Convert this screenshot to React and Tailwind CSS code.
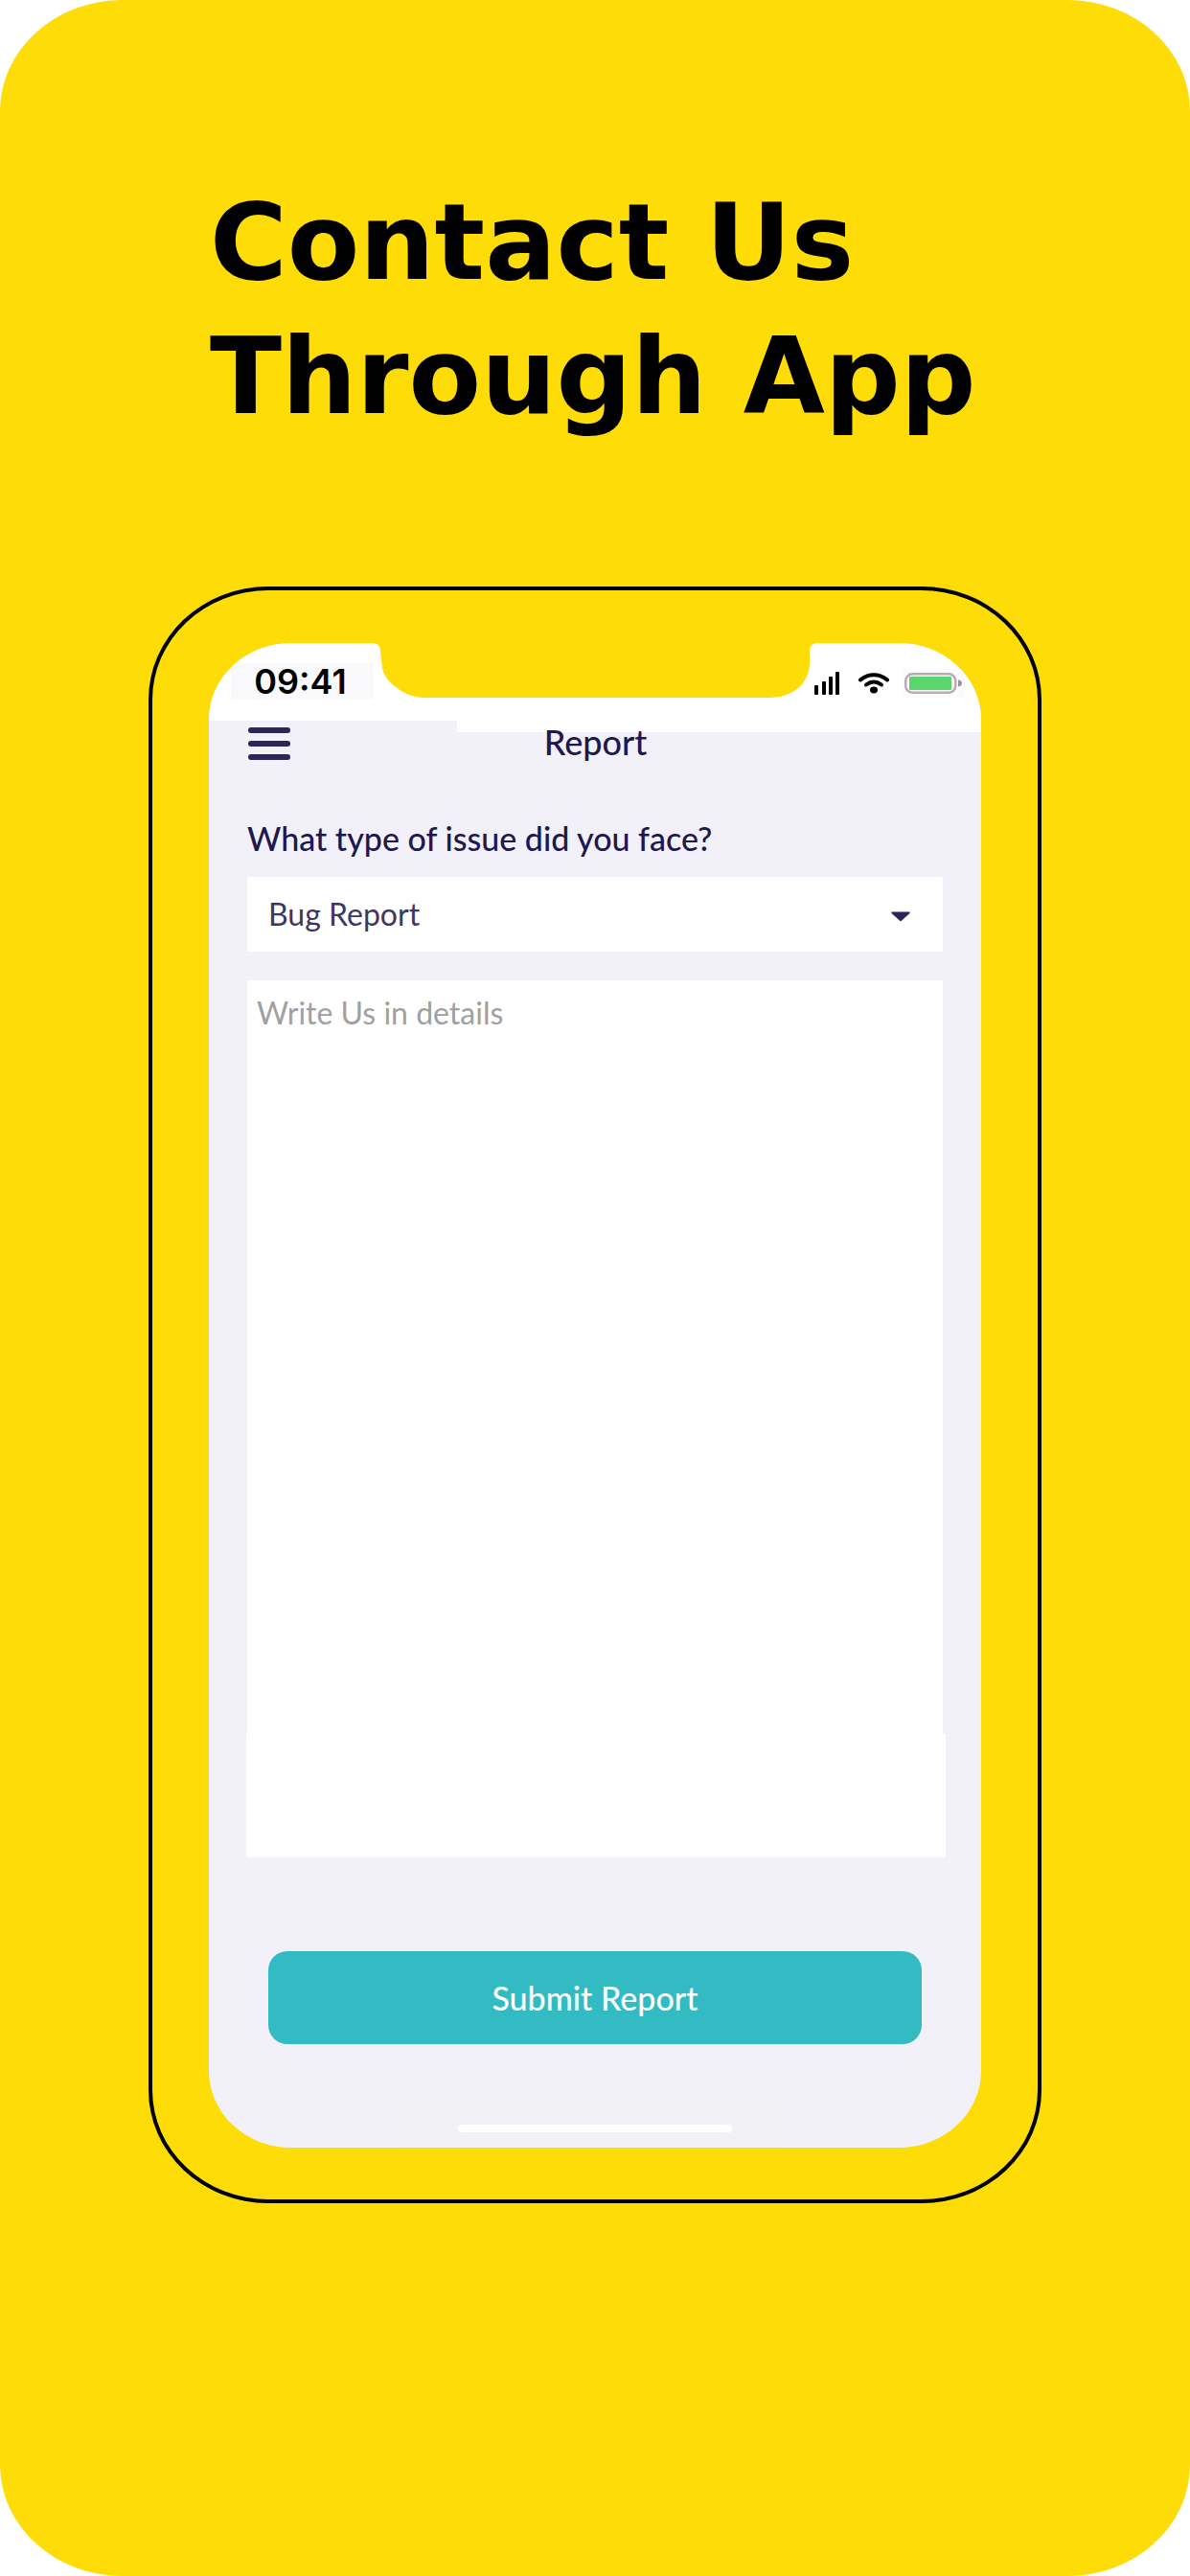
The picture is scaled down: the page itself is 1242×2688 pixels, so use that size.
function Notch() {
  return (
    <svg
      className="absolute left-1/2 top-0 -translate-x-1/2"
      width="466"
      height="58"
      viewBox="0 0 466 58"
      fill="#fddc08"
      aria-hidden="true"
    >
      <path d="M0 -1V0C6 0 9 3 9 9L11 26C13 40 35 57 54 57H415C440 57 457 42 457 20V9C457 3 460 0 466 0V-1Z" />
    </svg>
  );
}

function SignalIcon() {
  return (
    <svg width="27" height="24" viewBox="0 0 27 24" fill="#000" aria-hidden="true">
      <rect x="0" y="14" width="4" height="10" rx="1" />
      <rect x="8" y="10" width="4" height="14" rx="1" />
      <rect x="15" y="5" width="4" height="19" rx="1" />
      <rect x="22" y="0" width="4" height="24" rx="1" />
    </svg>
  );
}

function WifiIcon() {
  return (
    <svg width="32" height="22" viewBox="0 0 32 22" fill="none" aria-hidden="true">
      <path d="M2 7.5C10 0.5 22 0.5 30 7.5" stroke="#000" strokeWidth="4" strokeLinecap="round" />
      <path d="M8 12.5C13 8.8 19 8.8 24 12.5" stroke="#000" strokeWidth="4" strokeLinecap="round" />
      <ellipse cx="16" cy="18" rx="4" ry="3.4" fill="#000" />
    </svg>
  );
}

function BatteryIcon() {
  return (
    <svg width="61" height="22" viewBox="0 0 61 22" fill="none" aria-hidden="true">
      <rect x="1.25" y="1.25" width="52" height="19.5" rx="7" fill="#fff" stroke="#b9aab8" strokeWidth="2.5" />
      <rect x="5" y="4" width="44" height="14" rx="1" fill="#5bd66c" />
      <path d="M56 7.5C58 7.5 60 9 60 11S58 14.5 56 14.5Z" fill="#9b8f9b" />
    </svg>
  );
}

function StatusBar() {
  return (
    <div className="relative flex h-[81px] items-start justify-between bg-white pl-[23px] pr-[17px] pt-[21px]">
      <Notch />
      <div className="flex h-[38px] w-[149px] items-center justify-center bg-[#f9f9fc] pr-1 font-['Inter',sans-serif] text-[36px] font-semibold leading-none text-black">
        09:41
      </div>
      <div className="relative flex h-[38px] items-center pt-1">
        <SignalIcon />
        <div className="ml-[19px]">
          <WifiIcon />
        </div>
        <div className="ml-[14px] bg-[#fbfafd] px-0.5 py-1">
          <BatteryIcon />
        </div>
      </div>
    </div>
  );
}

function Header() {
  return (
    <header className="relative flex h-12 items-center pl-[41px]">
      <div className="absolute left-[259px] right-0 top-0 h-3 bg-white" />
      <button type="button" aria-label="Open menu" className="flex w-11 flex-col gap-2">
        <span className="h-1.5 rounded-sm bg-[#2b2558]" />
        <span className="h-1.5 rounded-sm bg-[#2b2558]" />
        <span className="h-1.5 rounded-sm bg-[#2b2558]" />
      </button>
      <h2 className="relative flex-1 self-start pr-[84px] text-center text-[36px] font-medium leading-[44px] text-[#1f184e]">
        Report
      </h2>
    </header>
  );
}

function ReportForm() {
  return (
    <form className="flex flex-col px-10 pt-[55px]" onSubmit={(e) => e.preventDefault()}>
      <label htmlFor="issue" className="text-[34px] font-medium leading-10 text-[#1f184e]">
        What type of issue did you face?
      </label>
      <div className="relative mt-5">
        <select
          id="issue"
          defaultValue="bug"
          className="h-[78px] w-full appearance-none bg-white pl-[22px] pr-16 text-[32px] text-[#3d3763] outline-none"
        >
          <option value="bug">Bug Report</option>
        </select>
        <svg
          className="pointer-events-none absolute right-[34px] top-9"
          width="20"
          height="11"
          viewBox="0 0 20 11"
          aria-hidden="true"
        >
          <path d="M0.5 0.5H19.5V2L10 10.5L0.5 2Z" fill="#2b2558" />
        </svg>
      </div>
      <div className="relative mt-[30px]">
        <div className="absolute -left-px -right-[3px] bottom-0 h-[129px] bg-white" />
        <textarea
          aria-label="Details"
          placeholder="Write Us in details"
          className="relative block h-[915px] w-full resize-none bg-white px-2.5 pt-3.5 text-[32px] leading-10 text-[#3d3763] outline-none placeholder:text-[#a0a0a0]"
        />
      </div>
      <button
        type="submit"
        className="mx-[22px] mt-[98px] h-[97px] rounded-[20px] bg-[#32bbc3] text-[34px] font-medium text-white"
      >
        Submit Report
      </button>
    </form>
  );
}

export default function App() {
  return (
    <div className="bg-white">
      <main className="min-h-screen rounded-[128px/116px] bg-[#fddc08] px-[155px] pb-[389px] pt-[183px] font-['Lato',sans-serif]">
        <h1 className="pl-16 font-['DejaVu_Sans',sans-serif] text-[110px] font-bold leading-[140px] text-black">
          Contact Us
          <br />
          Through App
        </h1>
        <section className="mt-[149px] rounded-[125px/118px] border-4 border-black px-[59px] pb-[54px] pt-[55px]">
          <div className="overflow-hidden rounded-[86px/80px] bg-[#f2f1f9]">
            <StatusBar />
            <Header />
            <ReportForm />
            <div className="mx-auto mt-[55px] flex h-[53px] w-[414px] justify-center bg-[#f2f1f6] pt-[29px]">
              <div className="h-2 w-[286px] rounded-full bg-white" />
            </div>
          </div>
        </section>
      </main>
    </div>
  );
}
